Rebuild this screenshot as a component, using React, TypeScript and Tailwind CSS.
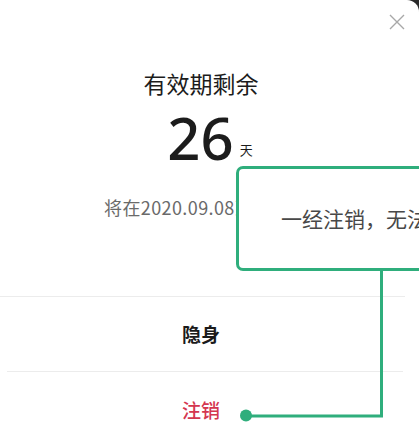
import React from 'react';

const cjk = '"Noto Sans CJK SC", "Noto Sans", sans-serif';

export default function App() {
  return (
    <div className="relative w-[419px] h-[446px] overflow-hidden bg-[#2a2a2a]" style={{ fontFamily: cjk }}>
      <div className="relative h-full bg-white rounded-tr-[12px] flex flex-col">
        {/* header */}
        <div className="h-[69px] flex justify-end items-start pt-[14px] pr-[14px]">
          <svg width="16" height="16" viewBox="0 0 16 16" className="text-[#a8a8a8]">
            <path d="M1 1 L15 15 M15 1 L1 15" stroke="currentColor" strokeWidth="1.4" fill="none" />
          </svg>
        </div>

        <div className="flex flex-col items-center pr-[17px]">
          <h2 className="text-[23px] leading-[30px] text-[#1c1c1c]">有效期剩余</h2>
          <div className="mt-[10px] flex items-end h-[60px] pl-[18px]">
            <span className="text-[58px] leading-[60px] font-medium text-[#1c1c1c]" style={{ fontFamily: '"Noto Sans", sans-serif' }}>26</span>
            <span className="text-[13px] leading-none text-[#1c1c1c] ml-[6px] mb-[12px]">天</span>
          </div>
        </div>
        <p className="mt-[28px] pl-[104px] text-[18px] leading-[22px] tracking-[0.4px] text-[#6a6a6a] whitespace-nowrap">
          将在2020.09.08到期，到期后自动失效
        </p>

        <div className="mt-[78px] h-px bg-[#ececec] mr-[14px]" />
        <button className="h-[76px] pt-[2px] pr-[17px] flex items-center justify-center text-[19px] font-bold text-[#1a1a1a]">隐身</button>
        <div className="h-px bg-[#ececec] ml-[7px] mr-[16px]" />
        <button className="h-[76px] pt-[3px] pr-[17px] flex items-center justify-center text-[19px] font-medium text-[#d4364f]">注销</button>

        {/* annotation callout */}
        <div className="absolute left-[236px] top-[166px] w-[260px] h-[105px] rounded-[7px] border-[3px] border-[#2fae7c] bg-white flex items-center pl-[42px]">
          <span className="text-[21px] text-[#484848] whitespace-nowrap">一经注销，无法恢复</span>
        </div>
        <svg className="absolute left-0 top-0 pointer-events-none" width="419" height="446">
          <path d="M381.5 270 L381.5 416 L246 416" stroke="#2fae7c" strokeWidth="3" fill="none" />
          <circle cx="246" cy="415.5" r="6" fill="#2fae7c" />
        </svg>
      </div>
    </div>
  );
}
